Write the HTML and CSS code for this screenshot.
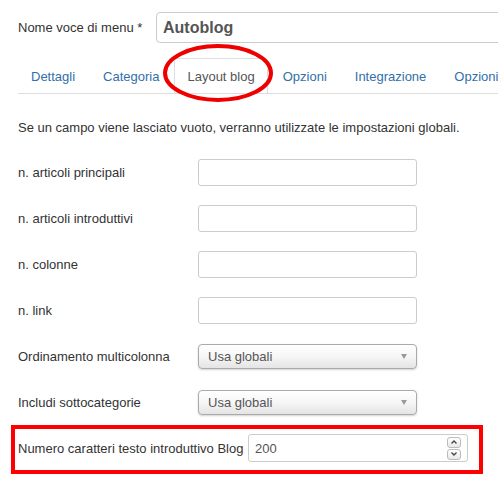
FILE: index.html
```html
<!DOCTYPE html>
<html lang="it">
<head>
<meta charset="utf-8">
<title>Layout blog</title>
<link rel="stylesheet" href="styles.css">
</head>
<body>
<div class="page">
  <div class="title-row">
    <label class="title-label">Nome voce di menu *</label>
    <div class="title-input">Autoblog</div>
  </div>

  <div class="tabs-wrap">
    <ul class="tabs">
      <li class="tab"><a>Dettagli</a></li>
      <li class="tab"><a>Categoria</a></li>
      <li class="tab active"><a>Layout blog</a></li>
      <li class="tab"><a>Opzioni</a></li>
      <li class="tab"><a>Integrazione</a></li>
      <li class="tab"><a>Opzioni</a></li>
    </ul>
    <svg class="circle-mark" width="114" height="62" viewBox="0 0 114 62">
      <ellipse cx="57" cy="31" rx="53" ry="27" fill="none" stroke="#ee0000" stroke-width="4"/>
    </svg>
  </div>

  <p class="desc">Se un campo viene lasciato vuoto, verranno utilizzate le impostazioni globali.</p>

  <div class="form">
    <div class="row">
      <span class="lbl">n. articoli principali</span>
      <div class="text-field"></div>
    </div>
    <div class="row">
      <span class="lbl">n. articoli introduttivi</span>
      <div class="text-field"></div>
    </div>
    <div class="row">
      <span class="lbl">n. colonne</span>
      <div class="text-field"></div>
    </div>
    <div class="row">
      <span class="lbl">n. link</span>
      <div class="text-field"></div>
    </div>
    <div class="row">
      <span class="lbl">Ordinamento multicolonna</span>
      <div class="select-field"><span>Usa globali</span><span class="caret"></span></div>
    </div>
    <div class="row">
      <span class="lbl">Includi sottocategorie</span>
      <div class="select-field"><span>Usa globali</span><span class="caret"></span></div>
    </div>
    <div class="highlight">
      <span class="lbl-wide">Numero caratteri testo introduttivo Blog</span>
      <div class="num-field">
        <span class="num-value">200</span>
        <span class="spinner">
          <span class="spin-btn"><svg width="6" height="4" viewBox="0 0 6 4"><path d="M0.5 3.5 L3 1 L5.5 3.5" fill="none" stroke="#444" stroke-width="1.3"/></svg></span>
          <span class="spin-btn"><svg width="6" height="4" viewBox="0 0 6 4"><path d="M0.5 0.5 L3 3 L5.5 0.5" fill="none" stroke="#444" stroke-width="1.3"/></svg></span>
        </span>
      </div>
    </div>
  </div>
</div>
</body>
</html>
```

FILE: styles.css
```css
html, body {
  margin: 0;
  padding: 0;
  background: #fff;
  overflow: hidden;
}

body {
  font-family: "Liberation Sans", Arial, sans-serif;
  font-size: 13px;
  color: #333;
}

.page {
  padding: 12px 0 0 18px;
  width: 480px;
  overflow: hidden;
}

.title-row {
  display: flex;
  align-items: center;
  height: 31px;
  overflow: hidden;
}

.title-label {
  flex: none;
  width: 138px;
}

.title-input {
  flex: none;
  box-sizing: border-box;
  width: 400px;
  height: 31px;
  border: 1px solid #ccc;
  border-radius: 4px;
  padding-left: 6px;
  display: flex;
  align-items: center;
  font-size: 16px;
  font-weight: bold;
  color: #555;
}

.tabs-wrap {
  position: relative;
  margin-top: 15px;
}

.tabs {
  list-style: none;
  margin: 0;
  padding: 0;
  display: flex;
  height: 35px;
  border-bottom: 1px solid #ddd;
  overflow: hidden;
}

.tab {
  margin-right: 2px;
}

.tab a {
  display: block;
  box-sizing: border-box;
  height: 35px;
  padding: 10px 12px 0;
  line-height: 16px;
  border: 1px solid transparent;
  border-radius: 4px 4px 0 0;
  color: #336fa8;
  white-space: nowrap;
}

.tab.active a {
  height: 36px;
  border-color: #ddd;
  border-bottom-color: #fff;
  background: #fff;
  color: #555;
}

.circle-mark {
  position: absolute;
  left: 143px;
  top: -16px;
}

.desc {
  margin: 25px 0 0;
  line-height: 18px;
}

.form {
  margin-top: 22px;
}

.row {
  display: flex;
  align-items: center;
  height: 27px;
}

.row + .row {
  margin-top: 19px;
}

.lbl {
  flex: none;
  width: 180px;
}

.text-field {
  box-sizing: border-box;
  width: 219px;
  height: 27px;
  border: 1px solid #ccc;
  border-radius: 3px;
  background: #fff;
}

.select-field {
  box-sizing: border-box;
  width: 219px;
  height: 25px;
  border: 1px solid #aaa;
  border-radius: 4px;
  background: linear-gradient(#ffffff 0%, #f6f6f6 50%, #e4e4e4 100%);
  box-shadow: 0 1px 2px rgba(0, 0, 0, 0.18);
  display: flex;
  align-items: center;
  justify-content: space-between;
  padding: 0 9px 0 9px;
  color: #555;
}

.caret {
  width: 0;
  height: 0;
  border-left: 3.5px solid transparent;
  border-right: 3.5px solid transparent;
  border-top: 5px solid #999;
}

.highlight {
  margin: 9px 0 0 -7px;
  box-sizing: border-box;
  width: 472px;
  height: 49px;
  border: 4px solid #ff0000;
  padding: 1px 0 4px 3px;
  display: flex;
  align-items: center;
}

.lbl-wide {
  flex: none;
  width: 230px;
  white-space: nowrap;
}

.num-field {
  box-sizing: border-box;
  width: 220px;
  height: 28px;
  border: 1px solid #ccc;
  border-radius: 3px;
  display: flex;
  align-items: center;
  padding: 0 6px 0 6px;
  color: #555;
}

.num-value {
  flex: 1;
}

.spinner {
  display: flex;
  flex-direction: column;
  gap: 1px;
}

.spin-btn {
  box-sizing: border-box;
  width: 14px;
  height: 11px;
  border: 1px solid #bbb;
  border-radius: 3px;
  background: linear-gradient(#ffffff, #e8e8e8);
  display: flex;
  align-items: center;
  justify-content: center;
}
```
